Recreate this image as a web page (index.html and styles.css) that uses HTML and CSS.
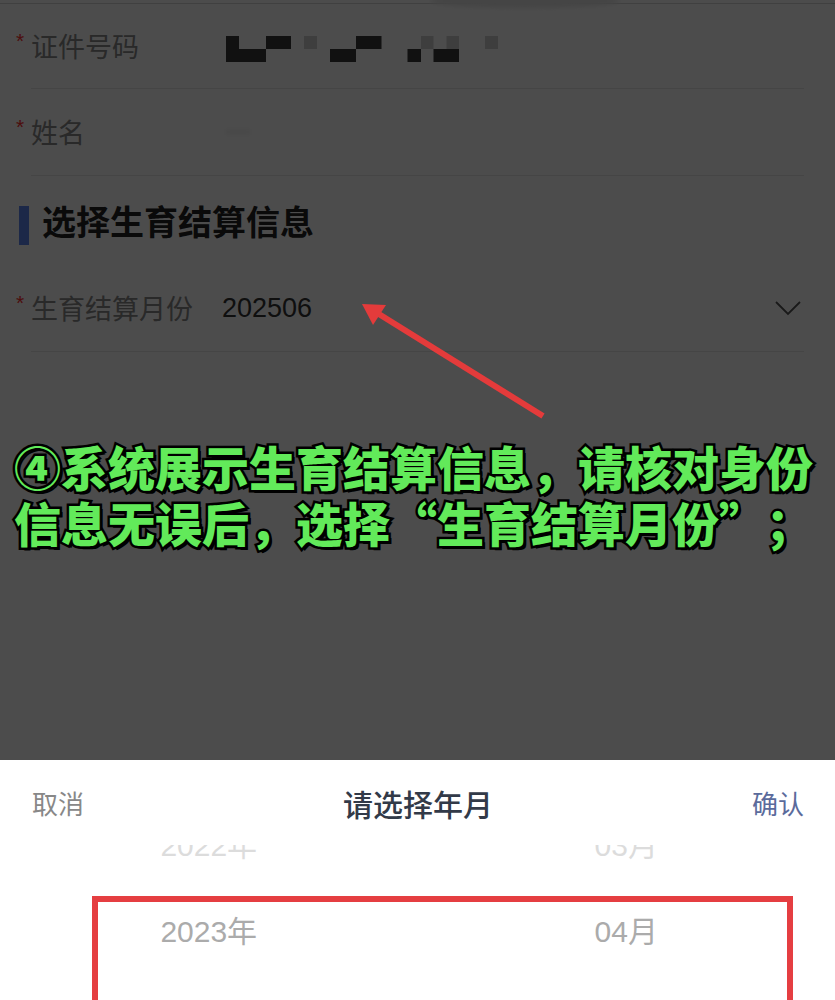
FILE: index.html
```html
<!DOCTYPE html>
<html lang="zh-CN">
<head>
<meta charset="utf-8">
<title>选择生育结算信息</title>
<link rel="stylesheet" href="styles.css">
</head>
<body>
<div class="screen">
  <div class="form">
    <div class="topbar"></div>
    <div class="top-shade"></div>
    <div class="row r1">
      <span class="star">*</span><span class="label">证件号码</span>
      <svg class="mosaic" width="275" height="26" viewBox="0 0 275 26">
        <g fill="#3a3a3a">
          <rect x="0" y="0" width="13" height="26"/>
          <rect x="0" y="13" width="40" height="13"/>
          <rect x="40" y="0" width="25" height="13"/>
          <rect x="104" y="13" width="26" height="13"/>
          <rect x="130" y="0" width="25.5" height="13"/>
          <rect x="181.5" y="13" width="13.5" height="13"/>
          <rect x="207.5" y="13" width="25.5" height="13"/>
        </g>
        <g fill="#d0d0d0">
          <rect x="78" y="0" width="13" height="13"/>
          <rect x="195" y="0" width="12.5" height="13"/>
          <rect x="220.5" y="0" width="12.5" height="13"/>
          <rect x="259" y="0" width="13" height="13"/>
        </g>
      </svg>
    </div>
    <div class="row r2">
      <span class="star">*</span><span class="label">姓名</span>
      <span class="name-blur"></span>
    </div>
    <div class="section">
      <span class="bar"></span>
      <h2 class="section-title">选择生育结算信息</h2>
    </div>
    <div class="row r3">
      <span class="star">*</span><span class="label">生育结算月份</span>
      <span class="value">202506</span>
      <svg class="chev" width="28" height="16" viewBox="0 0 28 16">
        <polyline points="2,2 14,14 26,2" fill="none" stroke="#555" stroke-width="1.8"/>
      </svg>
    </div>
  </div>

  <div class="mask"></div>

  <svg class="arrow" width="835" height="760" viewBox="0 0 835 760">
    <line x1="543" y1="416" x2="374" y2="311" stroke="#e43b3b" stroke-width="6"/>
    <polygon points="362,304 386,305 373,325" fill="#e43b3b"/>
  </svg>

  <p class="note">④系统展示生育结算信息，请核对身份<br>信息无误后，选择<span class="q qo">“</span>生育结算月份<span class="q qc">”</span>；</p>

  <div class="sheet">
    <div class="sheet-head">
      <span class="cancel">取消</span>
      <span class="sheet-title">请选择年月</span>
      <span class="ok">确认</span>
    </div>
    <div class="picker">
      <div class="col">
        <div class="item faded">2022年</div>
        <div class="item">2023年</div>
      </div>
      <div class="col">
        <div class="item faded">03月</div>
        <div class="item">04月</div>
      </div>
    </div>
  </div>

  <div class="highlight"></div>
</div>
</body>
</html>
```

FILE: styles.css
```css
html, body {
  margin: 0;
  padding: 0;
}
body {
  width: 835px;
  height: 1000px;
  overflow: hidden;
  font-family: "Noto Sans CJK SC", sans-serif;
  background: #fff;
}
.screen {
  position: relative;
  display: flex;
  flex-direction: column;
  height: 1000px;
}
.form {
  position: relative;
  flex: none;
  height: 760px;
  background: #fff;
  overflow: hidden;
}
.topbar {
  height: 3px;
  border-bottom: 1px solid #d8d8d8;
}
.top-shade {
  position: absolute;
  left: 430px;
  top: -6px;
  width: 190px;
  height: 14px;
  border-radius: 50%;
  background: #e6e6e6;
  filter: blur(2px);
}
.row {
  display: flex;
  align-items: center;
  margin: 0 31px;
  border-bottom: 1px solid #e6e6e6;
}
.r1 { height: 84px; }
.r2, .r3 { height: 86px; }
.star {
  width: 10px;
  margin-left: -16px;
  margin-right: 6px;
  margin-top: -12px;
  text-align: center;
  font: 21px/1 "Liberation Sans", sans-serif;
  color: #ff3030;
}
.label {
  width: 191px;
  font-size: 27px;
  line-height: 36px;
  color: #8a8a8a;
}
.value {
  font: 27px/36px "Liberation Sans", "Noto Sans CJK SC", sans-serif;
  color: #333;
}
.mosaic {
  margin-left: 4px;
  margin-top: 6px;
}
.name-blur {
  width: 24px;
  height: 6px;
  margin-left: 4px;
  background: #f2f2f2;
  filter: blur(2px);
}
.chev {
  margin-left: auto;
  margin-right: 2px;
}
.section {
  height: 89px;
  display: flex;
  align-items: center;
}
.bar {
  width: 10px;
  height: 39px;
  margin: 10px 13px 0 19px;
  background: #5f86f0;
}
.section-title {
  margin: 0;
  font-size: 34px;
  line-height: 44px;
  font-weight: 700;
  color: #222;
}
.mask {
  position: absolute;
  left: 0;
  top: 0;
  width: 100%;
  height: 760px;
  background: rgba(0, 0, 0, 0.7);
}
.arrow {
  position: absolute;
  left: 0;
  top: 0;
}
.note {
  position: absolute;
  left: 14px;
  top: 438px;
  margin: 0;
  white-space: nowrap;
  font-size: 47px;
  line-height: 56px;
  font-weight: 900;
  color: #62ea5a;
  -webkit-text-stroke: 5px #000;
  paint-order: stroke fill;
  text-shadow: 3px 3px 0 #000;
}
.q {
  display: inline-block;
  width: 47px;
}
.qo { text-align: right; }
.qc { text-align: left; }
.sheet {
  flex: 1;
  display: flex;
  flex-direction: column;
  background: #fff;
}
.sheet-head {
  flex: none;
  height: 85px;
  display: flex;
  align-items: center;
  justify-content: space-between;
  padding: 0 31px 0 32px;
}
.cancel {
  font-size: 26px;
  color: #888;
}
.sheet-title {
  font-size: 30px;
  font-weight: 500;
  color: #323a48;
}
.ok {
  font-size: 26px;
  color: #5b6b9c;
}
.picker {
  flex: 1;
  display: flex;
  overflow: hidden;
}
.col {
  flex: 1;
  margin-top: -42px;
  text-align: center;
}
.item {
  height: 86px;
  font: 30px/86px "Liberation Sans", "Noto Sans CJK SC", sans-serif;
  color: #ababab;
}
.item.faded {
  color: #dcdcdc;
}
.highlight {
  position: absolute;
  left: 92px;
  top: 896px;
  width: 689px;
  height: 120px;
  border: 6px solid #e53e41;
}
```
